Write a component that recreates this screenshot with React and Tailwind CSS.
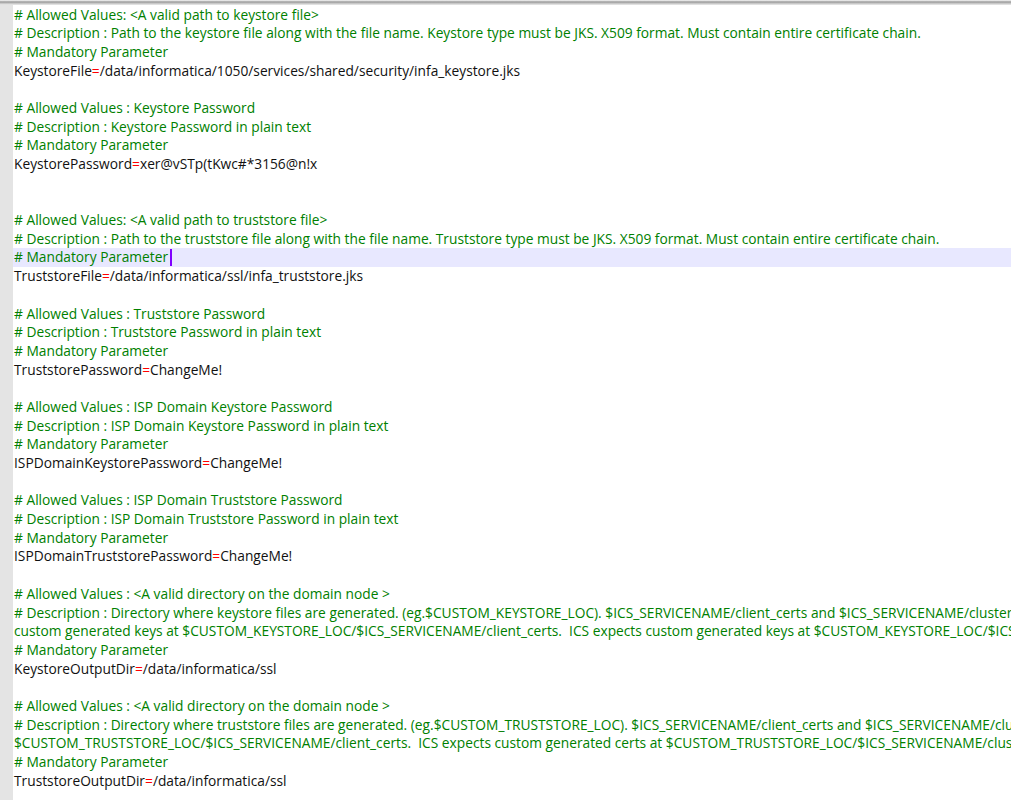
import React from 'react';

const lines = [
  ['c', '# Allowed Values: <A valid path to keystore file>'],
  ['c', '# Description : Path to the keystore file along with the file name. Keystore type must be JKS. X509 format. Must contain entire certificate chain.'],
  ['c', '# Mandatory Parameter'],
  ['kv', 'KeystoreFile', '/data/informatica/1050/services/shared/security/infa_keystore.jks'],
  ['b'],
  ['c', '# Allowed Values : Keystore Password'],
  ['c', '# Description : Keystore Password in plain text'],
  ['c', '# Mandatory Parameter'],
  ['kv', 'KeystorePassword', 'xer@vSTp(tKwc#*3156@n!x'],
  ['b'],
  ['b'],
  ['c', '# Allowed Values: <A valid path to truststore file>'],
  ['c', '# Description : Path to the truststore file along with the file name. Truststore type must be JKS. X509 format. Must contain entire certificate chain.'],
  ['cur', '# Mandatory Parameter'],
  ['kv', 'TruststoreFile', '/data/informatica/ssl/infa_truststore.jks'],
  ['b'],
  ['c', '# Allowed Values : Truststore Password'],
  ['c', '# Description : Truststore Password in plain text'],
  ['c', '# Mandatory Parameter'],
  ['kv', 'TruststorePassword', 'ChangeMe!'],
  ['b'],
  ['c', '# Allowed Values : ISP Domain Keystore Password'],
  ['c', '# Description : ISP Domain Keystore Password in plain text'],
  ['c', '# Mandatory Parameter'],
  ['kv', 'ISPDomainKeystorePassword', 'ChangeMe!'],
  ['b'],
  ['c', '# Allowed Values : ISP Domain Truststore Password'],
  ['c', '# Description : ISP Domain Truststore Password in plain text'],
  ['c', '# Mandatory Parameter'],
  ['kv', 'ISPDomainTruststorePassword', 'ChangeMe!'],
  ['b'],
  ['c', '# Allowed Values : <A valid directory on the domain node >'],
  ['c', '# Description : Directory where keystore files are generated. (eg.$CUSTOM_KEYSTORE_LOC). $ICS_SERVICENAME/client_certs and $ICS_SERVICENAME/cluster_certs. ICS expects'],
  ['c', 'custom generated keys at $CUSTOM_KEYSTORE_LOC/$ICS_SERVICENAME/client_certs.  ICS expects custom generated keys at $CUSTOM_KEYSTORE_LOC/$ICS_SERVICENAME/cluster_certs.'],
  ['c', '# Mandatory Parameter'],
  ['kv', 'KeystoreOutputDir', '/data/informatica/ssl'],
  ['b'],
  ['c', '# Allowed Values : <A valid directory on the domain node >'],
  ['c', '# Description : Directory where truststore files are generated. (eg.$CUSTOM_TRUSTSTORE_LOC). $ICS_SERVICENAME/client_certs and $ICS_SERVICENAME/cluster_certs.'],
  ['c', '$CUSTOM_TRUSTSTORE_LOC/$ICS_SERVICENAME/client_certs.  ICS expects custom generated certs at $CUSTOM_TRUSTSTORE_LOC/$ICS_SERVICENAME/cluster_certs.'],
  ['c', '# Mandatory Parameter'],
  ['kv', 'TruststoreOutputDir', '/data/informatica/ssl'],
];

const Line = ({ l }) => {
  const [type, a, b] = l;
  if (type === 'b') return <div className="h-[18.7px]" />;
  if (type === 'kv') {
    return (
      <div className="h-[18.7px] pl-[14px] text-[#111111]">
        {a}<span className="text-[#ff0000]">=</span>{b}
      </div>
    );
  }
  if (type === 'cur') {
    return (
      <div className="h-[18.7px] pl-[14px] bg-[#e8e8ff] text-[#008000] flex items-center">
        <span>{a}</span>
        <span className="inline-block w-[2px] h-[17px] bg-[#8000ff] ml-[2px]" />
      </div>
    );
  }
  return <div className="h-[18.7px] pl-[14px] text-[#008000]">{a}</div>;
};

export default function App() {
  return (
    <div className="w-[1011px] h-[804px] bg-white overflow-hidden flex flex-col">
      <div className="h-[5px] bg-gradient-to-b from-white via-[#9a9a9a] to-[#d8d8d8] border-b border-[#e0e0e0]" />
      <div className="flex-1 relative">
        <div className="absolute left-0 top-0 bottom-[4px] w-[13px] bg-[#e4e4e4]" />
        <div
          className="pt-[0.5px] whitespace-pre leading-[18.7px] text-[13.75px] font-medium"
          style={{ fontFamily: '"Open Sans", "Noto Sans", sans-serif' }}
        >
          {lines.map((l, i) => (
            <Line key={i} l={l} />
          ))}
        </div>
      </div>
    </div>
  );
}
